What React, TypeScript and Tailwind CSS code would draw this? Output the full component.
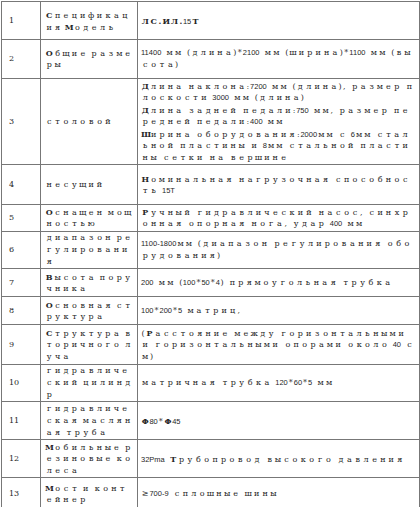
import React from "react"

// Строка таблицы: номер, название параметра, значение; каждая строка текста задана явно
type Row = { n: number; h: number; left: string[]; right: string[] }

// ^X — жирная буква, #...# — жирный фрагмент; цифры и латиница идут узким шрифтом
const rows: Row[] = [
  { n: 1, h: 38, left: ["^Спецификац", "ия ^Модель"], right: ["#ЛС.ИЛ.#15#Т#"] },
  { n: 2, h: 39, left: ["^Общие разме", "ры"], right: ["11400 мм (длина)*2100 мм (ширина)*1100 мм (вы", "сота)"] },
  {
    n: 3,
    h: 86,
    left: ["столовой"],
    right: [
      "^Длина наклона:7200 мм (длина), размер п",
      "лоскости 3000 мм (длина)",
      "^Длина задней педали:750 мм, размер пе",
      "редней педали:400 мм",
      "^Ширина оборудования:2000мм с 6мм стал",
      "ьной пластины и 8мм стальной пласти",
      "ны сетки на вершине",
    ],
  },
  { n: 4, h: 40, left: ["несущий"], right: ["^Номинальная нагрузочная способнос", "ть 15T"] },
  { n: 5, h: 27, left: ["^Оснащен мощ", "ностью"], right: ["^Ручный гидравлический насос, синхр", "онная опорная нога, удар 400 мм"] },
  { n: 6, h: 35, left: ["диапазон ре", "гулировани", "я"], right: ["1100-1800мм (диапазон регулирования обо", "рудования)"] },
  { n: 7, h: 28, left: ["^Высота пору", "чника"], right: ["200 мм (100*50*4) прямоугольная трубка"] },
  { n: 8, h: 28, left: ["^Основная ст", "руктура"], right: ["100*200*5 матриц,"] },
  { n: 9, h: 40, left: ["^Структура в", "торичного л", "уча"], right: ["(^Расстояние между горизонтальными", "и горизонтальными опорами около 40 с", "м)"] },
  { n: 10, h: 36, left: ["гидравличе", "ский цилинд", "р"], right: ["матричная трубка 120*60*5 мм"] },
  { n: 11, h: 38, left: ["гидравличе", "ская маслян", "ая труба"], right: ["^Φ80*^Φ45"] },
  { n: 12, h: 38, left: ["^Мобильные р", "езиновые ко", "леса"], right: ["32Pma ^Трубопровод высокого давления"] },
  { n: 13, h: 32, left: ["^Мост и конт", "ейнер"], right: ["≥700-9 сплошные шины"] },
]

function Line({ text, narrow }: { text: string; narrow?: boolean }) {
  const parts: React.ReactNode[] = []
  let bold = false
  let i = 0
  let key = 0
  while (i < text.length) {
    let ch = text[i]
    if (ch === "#") {
      bold = !bold
      i++
      continue
    }
    let b = bold
    if (ch === "^") {
      b = true
      i++
      ch = text[i]
    }
    const m = text.slice(i).match(/^([0-9][0-9\-]*|[A-Za-z]+)/)
    if (m) {
      parts.push(
        <span key={key++} className={"font-['Liberation_Sans',sans-serif] text-[7.5px] " + (b ? "font-bold" : "")}>
          {m[1]}
        </span>
      )
      i += m[1].length
      continue
    }
    let w = "inline-block w-[8.4px] text-center"
    if (ch === " ") w = narrow ? "inline-block w-[3px]" : "inline-block w-[4.2px]"
    else if (ch === "*") w = "inline-block w-[6px] text-center"
    else if (ch.charCodeAt(0) < 128) w = "inline-block w-[4.2px] text-center"
    parts.push(
      <span key={key++} className={w + (b ? " font-bold" : "")}>
        {ch === " " ? "\u00a0" : ch}
      </span>
    )
    i++
  }
  return <div className="whitespace-nowrap h-[12px] leading-[12px]">{parts}</div>
}

export default function App() {
  return (
    <div className="bg-white min-h-[507px] pt-[1px] pl-[1px] text-[#262626]">
      <table className="border-collapse table-fixed w-[418px] border border-[#555]">
        <colgroup>
          <col className="w-[39px]" />
          <col className="w-[97px]" />
          <col className="w-[282px]" />
        </colgroup>
        <tbody>
          {rows.map((r) => (
            <tr key={r.n} style={{ height: r.h }}>
              <td className="border border-[#777] align-middle p-0 pl-[7px] font-['DejaVu_Serif',serif] text-[8px]">
                {r.n}
              </td>
              <td className="border border-[#777] align-middle p-0 pl-[4px] font-['DejaVu_Serif',serif] text-[8px]">
                {r.left.map((t, k) => (
                  <Line key={k} text={t} narrow />
                ))}
              </td>
              <td className="border border-[#777] align-middle p-0 pl-[3px] font-['DejaVu_Serif',serif] text-[8px]">
                {r.right.map((t, k) => (
                  <Line key={k} text={t} />
                ))}
              </td>
            </tr>
          ))}
        </tbody>
      </table>
    </div>
  )
}
